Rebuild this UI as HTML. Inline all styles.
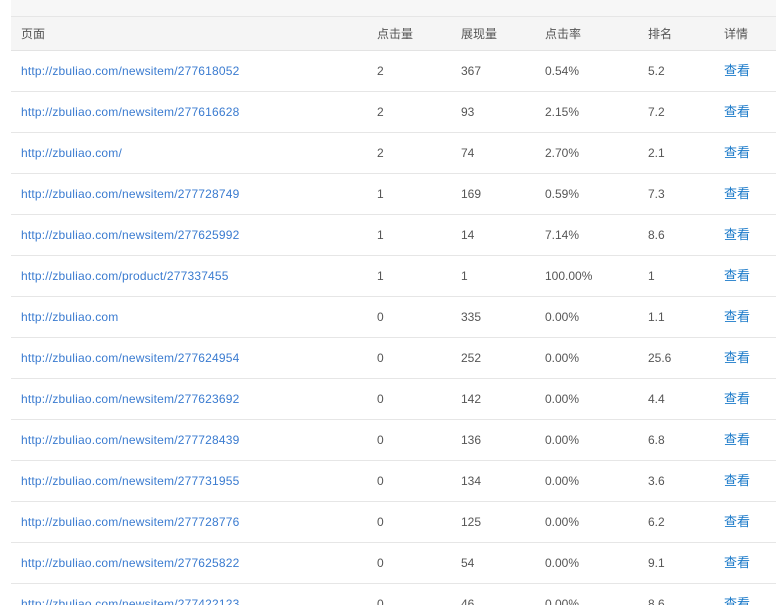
<!DOCTYPE html>
<html><head><meta charset="utf-8"><style>
html,body{margin:0;width:776px;height:605px;overflow:hidden}
body{background:#fff;font-family:"Liberation Sans","Noto Sans CJK SC",sans-serif;font-size:12px;color:#555;position:relative}
.top{position:absolute;left:11px;top:0;width:765px;height:16px;background:#f7f7f7;border-bottom:1px solid #e6e6e6}
.hd{position:absolute;left:11px;top:17px;width:765px;height:33px;background:#f5f5f5;border-bottom:1px solid #e3e3e3}
.row{position:absolute;left:11px;width:765px;height:40px;border-bottom:1px solid #e6e6e6}
.c{position:absolute;white-space:nowrap;line-height:14px}
.a{color:#3a7bd0;letter-spacing:0.19px}
.v{color:#1b7ac9;font-size:13px}
.h{color:#555;font-size:12px}
</style></head><body>
<div class="top"></div>
<div class="hd">
<span class="c h" style="left:10px;top:10px">页面</span>
<span class="c h" style="left:366px;top:10px">点击量</span>
<span class="c h" style="left:450px;top:10px">展现量</span>
<span class="c h" style="left:534px;top:10px">点击率</span>
<span class="c h" style="left:637px;top:10px">排名</span>
<span class="c h" style="left:713px;top:10px">详情</span>
</div>
<div id="rows"></div>
<script>
var d=[["http://zbuliao.com/newsitem/277618052",2,367,"0.54%","5.2"],
["http://zbuliao.com/newsitem/277616628",2,93,"2.15%","7.2"],
["http://zbuliao.com/",2,74,"2.70%","2.1"],
["http://zbuliao.com/newsitem/277728749",1,169,"0.59%","7.3"],
["http://zbuliao.com/newsitem/277625992",1,14,"7.14%","8.6"],
["http://zbuliao.com/product/277337455",1,1,"100.00%","1"],
["http://zbuliao.com",0,335,"0.00%","1.1"],
["http://zbuliao.com/newsitem/277624954",0,252,"0.00%","25.6"],
["http://zbuliao.com/newsitem/277623692",0,142,"0.00%","4.4"],
["http://zbuliao.com/newsitem/277728439",0,136,"0.00%","6.8"],
["http://zbuliao.com/newsitem/277731955",0,134,"0.00%","3.6"],
["http://zbuliao.com/newsitem/277728776",0,125,"0.00%","6.2"],
["http://zbuliao.com/newsitem/277625822",0,54,"0.00%","9.1"],
["http://zbuliao.com/newsitem/277422123",0,46,"0.00%","8.6"]];
var h="";
for(var i=0;i<d.length;i++){var r=d[i],t=51+41*i;
h+='<div class="row" style="top:'+t+'px">'+
'<span class="c a" style="left:10px;top:13px">'+r[0]+'</span>'+
'<span class="c" style="left:366px;top:13px">'+r[1]+'</span>'+
'<span class="c" style="left:450px;top:13px">'+r[2]+'</span>'+
'<span class="c" style="left:534px;top:13px">'+r[3]+'</span>'+
'<span class="c" style="left:637px;top:13px">'+r[4]+'</span>'+
'<span class="c v" style="left:713px;top:13px">查看</span></div>';}
document.getElementById("rows").innerHTML=h;
</script>
</body></html>
